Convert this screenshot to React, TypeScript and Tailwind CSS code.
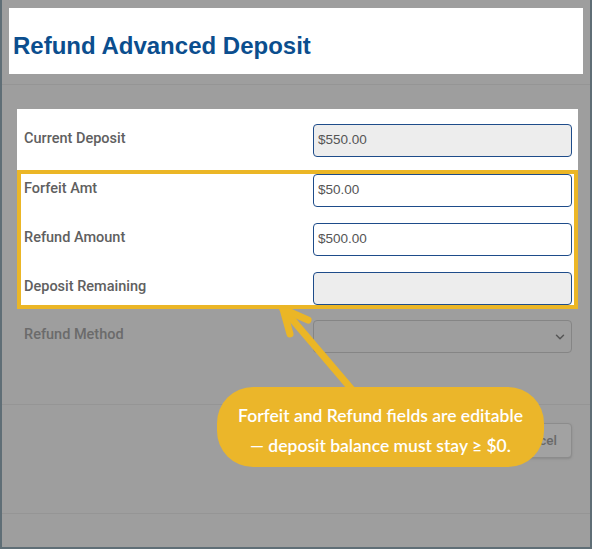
import { ChevronDown } from "lucide-react"

function Field({ label, value, disabled }: { label: string; value?: string; disabled?: boolean }) {
  return (
    <div className="flex items-center h-[33px]">
      <div className="w-[289px] pb-[4px] font-['Roboto',sans-serif] font-medium text-[14.5px] text-[#606060]">{label}</div>
      <div
        className={`flex-1 h-[33px] rounded-[4px] border border-[#1e4c8a] flex items-center px-[4px] text-[13.5px] text-[#555] ${
          disabled ? "bg-[#ededed]" : "bg-white"
        }`}
      >
        {value}
      </div>
    </div>
  )
}

export default function App() {
  return (
    <div className="relative w-[592px] h-[549px] overflow-hidden bg-[#9e9e9e] border-x-2 border-b-2 border-[#5f6e76] font-['Liberation_Sans',Arial,sans-serif]">
      <div className="pt-[8px] px-[7px]">
        <div className="h-[66px] bg-white pl-[4px] pt-[24px]">
          <h1 className="text-[24px] leading-[28px] font-bold text-[#0b4e8e]">Refund Advanced Deposit</h1>
        </div>
      </div>
      <div className="mt-[10px] h-px bg-[#959595]" />

      <div className="mt-[24px] ml-[15px] mr-[12px] h-[61px] bg-white pt-[15px] pl-[7px] pr-[6px]">
        <Field label="Current Deposit" value="$550.00" disabled />
      </div>

      <div className="ml-[15px] mr-[12px] h-[139px] border-4 border-[#ebb626] bg-white pl-[3px] pr-[2px] flex flex-col gap-[16px] overflow-hidden">
        <Field label="Forfeit Amt" value="$50.00" />
        <Field label="Refund Amount" value="$500.00" />
        <Field label="Deposit Remaining" disabled />
      </div>

      <div className="mt-[11px] ml-[15px] mr-[12px] pl-[7px] pr-[6px] flex items-center h-[33px]">
        <div className="w-[289px] pb-[4px] font-['Roboto',sans-serif] font-medium text-[14.5px] text-[#6b6b6b]">Refund Method</div>
        <div className="flex-1 h-[33px] rounded-[4px] border border-[#858585] flex items-center justify-end pr-[4px]">
          <ChevronDown className="w-[14px] h-[14px] text-[#555]" strokeWidth={2.5} />
        </div>
      </div>

      <div className="mt-[51px] h-px bg-[#959595]" />
      <div className="mt-[18px] flex justify-end pr-[18px]">
        <div className="h-[35px] px-[14px] flex items-center rounded-[4px] border border-[#8c8c8c] bg-[#a2a2a2] shadow-sm font-['Roboto',sans-serif] font-medium text-[13.5px] text-[#696969]">
          Cancel
        </div>
      </div>
      <div className="mt-[55px] h-px bg-[#959595]" />

      <svg className="absolute left-0 top-0 pointer-events-none" width="592" height="549" viewBox="0 0 592 549">
        <g stroke="#ebb626" strokeWidth="7" strokeLinecap="round" fill="none">
          <line x1="283" y1="311" x2="352" y2="392" />
          <line x1="281" y1="309" x2="288" y2="334" />
          <line x1="281" y1="309" x2="306" y2="320" />
        </g>
      </svg>

      <div className="absolute left-[215px] top-[387px] w-[327px] h-[80px] rounded-[36px] bg-[#ebb62a] pt-[7px] flex flex-col items-center justify-center font-['Lato',sans-serif] font-semibold text-[17.5px] leading-[30px] text-white">
        <div>Forfeit and Refund fields are editable</div>
        <div>— deposit balance must stay ≥ $0.</div>
      </div>
    </div>
  )
}
